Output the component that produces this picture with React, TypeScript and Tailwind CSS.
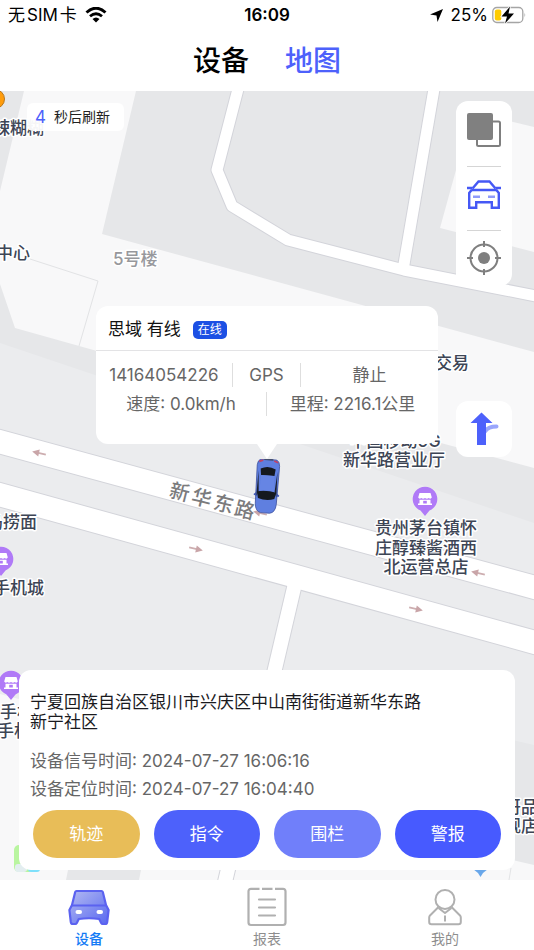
import { useEffect, useState } from "react";

const tools = [
  { key: "layers", label: "图层", Icon: LayersIcon },
  { key: "car", label: "车辆位置", Icon: CarOutlineIcon },
  { key: "locate", label: "我的位置", Icon: LocateIcon },
];

const actions = [
  { label: "轨迹", className: "bg-[#e8bd58]" },
  { label: "指令", className: "bg-[#4d61fb]" },
  { label: "围栏", className: "bg-[#707ffa]" },
  { label: "警报", className: "bg-[#475aff]" },
];

const tabs = [
  { key: "device", label: "设备", Icon: DeviceIcon },
  { key: "report", label: "报表", Icon: ReportIcon },
  { key: "mine", label: "我的", Icon: MineIcon },
];

function LayersIcon() {
  return (
    <svg width="34" height="34" viewBox="0 0 34 34" aria-hidden="true">
      <rect x="10" y="8.5" width="23" height="24.5" rx="1.5" fill="#fff" stroke="#7f7f7f" strokeWidth="2" />
      <rect x="0" y="0" width="26" height="27" rx="2" fill="#808080" />
    </svg>
  );
}

function CarOutlineIcon() {
  return (
    <svg width="34" height="34" viewBox="0 0 34 34" fill="none" stroke="#4558f5" strokeWidth="2.4" aria-hidden="true">
      <path d="M5.5 11.5 11.500 4.500h11l6 7" />
      <path d="M0 11h5.500M28.500 11H34M5 13h24" />
      <path d="M5 12.500 2.200 16v14.800h7V25.200h15.600v5.600h7V16L29 12.500" />
      <path d="M6 19.700h7M21 19.700h7" stroke="#8f9bfa" strokeWidth="2.600" />
    </svg>
  );
}

function LocateIcon() {
  return (
    <svg width="34" height="34" viewBox="0 0 34 34" fill="none" stroke="#7f7f7f" strokeWidth="2" aria-hidden="true">
      <circle cx="17" cy="17" r="13.500" />
      <circle cx="17" cy="17" r="6" fill="#7f7f7f" stroke="none" />
      <path d="M17 0v6M17 28v6M0 17h6M28 17h6" />
    </svg>
  );
}

function NavigateIcon() {
  return (
    <svg width="30" height="34" viewBox="-1 0 30 34" fill="none" aria-hidden="true">
      <path d="M15 19.500c1.500-2.500 5-5 11.500-5" stroke="#9aa6fc" strokeWidth="4" strokeLinecap="round" />
      <path d="M11.500 0.500 22.500 11h-6.500v22H7V11H0.500z" fill="#4d61fb" />
    </svg>
  );
}

function DeviceIcon() {
  return (
    <svg width="42" height="38" viewBox="0 0 42 38" aria-hidden="true">
      <defs>
        <linearGradient id="deviceFill" x1="0" y1="0" x2="1" y2="1">
          <stop offset="0" stopColor="#b4bbf2" />
          <stop offset="1" stopColor="#5868f0" />
        </linearGradient>
      </defs>
      <path
        d="M8.500 3h25q1 0 1.300 1L38 17l2.600 5-1.400 12q-.300 2-2 2h-2.500q-1 0-1.500-1l-2-4q-10.200-1.500-20.400 0l-2 4q-.500 1-1.500 1H4.800q-1.700 0-2-2L1.400 22 4 17 7.200 4q.300-1 1.300-1z"
        fill="url(#deviceFill)"
        stroke="#5b62f0"
        strokeWidth="2.200"
        strokeLinejoin="round"
      />
      <path d="M4 17.500h34" stroke="#5b62f0" strokeWidth="2.200" />
      <rect x="7.500" y="22" width="6.500" height="4" rx="2" fill="#fff" />
      <rect x="28.500" y="22" width="6.500" height="4" rx="2" fill="#fff" />
    </svg>
  );
}

function ReportIcon() {
  return (
    <svg width="40" height="40" viewBox="0 0 40 40" fill="none" stroke="#b0b0b0" strokeWidth="2.200" aria-hidden="true">
      <path d="M12.500 1.800H4Q1.500 1.800 1.500 4.300V35.500Q1.500 38 4 38H36Q38.500 38 38.500 35.500V4.300Q38.500 1.800 36 1.800H28M15 1.800H25.500" />
      <path d="M12 12.500h16M12 20.500h16M12 28.500h16" strokeLinecap="round" />
    </svg>
  );
}

function MineIcon() {
  return (
    <svg width="34" height="38" viewBox="0 0 34 38" fill="none" stroke="#b0b0b0" strokeWidth="2" strokeLinejoin="round" aria-hidden="true">
      <circle cx="17" cy="11.500" r="9.500" />
      <path d="M10.500 19 2 27.500Q1.200 28.300 1.200 29.500V34Q1.200 36.300 3.500 36.300H30.500Q32.800 36.300 32.800 34V29.500Q32.800 28.300 32 27.500L23.500 19" />
      <path d="M10.500 20 17 25 23.500 20M17 27.500v6" />
    </svg>
  );
}

function CarMarker() {
  return (
    <svg width="28" height="56" viewBox="0 0 28 56" aria-hidden="true">
      <g transform="translate(0 -1) rotate(4 14 28)">
        <path d="M1.500 37.500 4 35.500v3M26.500 37.500 24 35.500v3" stroke="#3f56b5" strokeWidth="1.500" fill="#5b78e0" />
        <path
          d="M6 1.500h16q3 1.500 3.200 6L24.500 46q-.500 8-6 9h-9q-5.500-1-6-9L2.800 7.500q.200-4.500 3.200-6z"
          fill="#5f7fe0"
          stroke="#3f539f"
          strokeWidth="0.800"
        />
        <path d="M4.500 13 6 33 4 39zM23.500 13 22 33l2 6z" fill="#1b202c" />
        <path d="M6.500 11q7.500-4 15 0l-.800 6.500H7.300z" fill="#15191f" />
        <path d="M4.300 34q9.700-2 19.400 0l-1.500 6.500q-8.200 3-16.400 0z" fill="#15191f" />
        <path d="M7.300 17.500h13.400l.6 15.500q-7.300-1.300-14.600 0z" fill="#6685e4" />
        <path d="M4.500 4 8.500 2.500M23.500 4 19.500 2.500" stroke="#c04468" strokeWidth="1.800" />
        <path d="M9.500 1.500h9" stroke="#46506f" strokeWidth="1.500" />
      </g>
    </svg>
  );
}

function ShopPin({ x, y }: { x: number; y: number }) {
  return (
    <g transform={`translate(${x} ${y})`}>
      <path d="M0 17 -4.500 11.500A12.300 12.300 0 1 1 4.500 11.500z" fill="#b07af7" />
      <path d="M-5.500-6h11l1.300 4.500q-1.200 2-3 .500-1.900 1.500-3.800 0-1.900 1.500-3.800 0-1.800 1.500-3-.500z" fill="#fff" />
      <path d="M-5.500.800h11V4.500H7V6H-7V4.500h1.500z" fill="#fff" />
      <rect x="-1.800" y="1.800" width="3.600" height="2.700" fill="#b07af7" />
    </g>
  );
}

function FlowArrow({ x, y, back }: { x: number; y: number; back?: boolean }) {
  return (
    <g transform={`translate(${x} ${y}) rotate(${back ? 193 : 13})`}>
      <path d="M-7 0H3" stroke="#cdaeb0" strokeWidth="1.800" />
      <path d="M0-3.500 7 0 0 3.500z" fill="#c9a5a8" />
    </g>
  );
}

function MapCanvas() {
  return (
    <svg
      className="absolute inset-0 w-full h-full"
      viewBox="0 91 534 789"
      preserveAspectRatio="xMidYMin slice"
      aria-label="地图"
    >
      <rect x="0" y="91" width="534" height="789" fill="#e6e7e9" />
      <path d="M0 343 534 523V745L500 737H0z" fill="#ebecee" />

      {/* blocks */}
      <path d="M24 91H136L102 234 534 352V468L97 351 15 328 0 284V191z" fill="#f8f8f9" />
      <path d="M472 112 534 127V252L440 228z" fill="#f8f8f9" />
      <path d="M0 694 60 710V880H0z" fill="#f8f8f9" />
      <path d="M0 870H68L66 880H0zM141 870 139 880H534V865L500 857V870z" fill="#f8f8f9" />
      <path d="M30 259 98 281 79 346M511 868 509 880" fill="none" stroke="#e2e3e5" />

      {/* streets: grey casing first, white surface on top */}
      <g fill="none" stroke="#d3d4da" strokeLinejoin="round">
        <path d="M238 89 217 170 232 206 288 240 404 270 536 296" strokeWidth="13" />
        <path d="M434 89 403 270" strokeWidth="13" />
        <path d="M-10 439 544 590" strokeWidth="25" />
        <path d="M-10 492 544 645" strokeWidth="25" />
        <path d="M297 575 225 882" strokeWidth="16" />
      </g>
      <g fill="none" stroke="#fff" strokeLinejoin="round">
        <path d="M238 89 217 170 232 206 288 240 404 270 536 296" strokeWidth="11" />
        <path d="M434 89 403 270" strokeWidth="11" />
        <path d="M-10 439 544 590" strokeWidth="23" />
        <path d="M-10 492 544 645" strokeWidth="23" />
        <path d="M297 575 225 882" strokeWidth="14" />
      </g>

      <FlowArrow x={39} y={453} back />
      <FlowArrow x={260} y={513} back />
      <FlowArrow x={478} y={573} back />
      <FlowArrow x={196} y={549} />
      <FlowArrow x={416} y={609} />

      <circle cx="-5" cy="99" r="9.500" fill="#ff9c0c" stroke="#b9771b" />
      <ShopPin x={425} y={499} />
      <ShopPin x={1} y={559} />
      <ShopPin x={11} y={683} />
      <rect x="14" y="845" width="20" height="27" rx="5" fill="#b9f5a0" />
      <rect x="15" y="864" width="12" height="8" rx="3" fill="#e3eef0" />
      <rect x="28" y="864" width="12" height="8" rx="3" fill="#7fe0fb" />
      <path d="M473 869h15l-5 4-2.500 4-2.500-4z" fill="#69a7ea" />

      <g
        className="font-medium text-[17px]"
        fill="#3d4555"
        stroke="#fff"
        strokeWidth="3"
        strokeLinejoin="round"
        paintOrder="stroke"
      >
        <text x="44" y="134" textAnchor="end">辣糊糊</text>
        <text x="30" y="259" textAnchor="end">中心</text>
        <text x="435" y="369">交易</text>
        <text x="395" y="447" textAnchor="middle">中国移动5G</text>
        <text x="394" y="466" textAnchor="middle">新华路营业厅</text>
        <text x="426" y="534" textAnchor="middle">贵州茅台镇怀</text>
        <text x="426" y="554" textAnchor="middle">庄醇臻酱酒西</text>
        <text x="426" y="573" textAnchor="middle">北运营总店</text>
        <text x="37" y="528" textAnchor="end">岛捞面</text>
        <text x="44" y="594" textAnchor="end">手机城</text>
        <text x="0" y="718">手机</text>
        <text x="-3" y="737">手机</text>
        <text x="504" y="813">哥品牌</text>
        <text x="504" y="832">舰店</text>
        <text x="113" y="265" fill="#97989c">5号楼</text>
      </g>
      <g className="font-medium text-[20px]" fill="#7b7b7d" textAnchor="middle">
        <text transform="translate(178 499) rotate(14)">新</text>
        <text transform="translate(200 505) rotate(14)">华</text>
        <text transform="translate(222 511) rotate(14)">东</text>
        <text transform="translate(243 517) rotate(14)">路</text>
      </g>
    </svg>
  );
}

function StatusBar() {
  return (
    <div className="grid grid-cols-3 items-center h-[30px] px-2 text-[17px] leading-[30px]">
      <div className="flex items-center gap-2">
        <span className="flex gap-[2px]">
          <span>无</span>
          <span>SIM</span>
          <span>卡</span>
        </span>
        <svg width="22" height="16" viewBox="0 0 22 16" aria-hidden="true">
          <path d="M1.500 5.500Q11-3 20.500 5.500" fill="none" stroke="#000" strokeWidth="3" />
          <path d="M5 9.300Q11 4.200 17 9.300" fill="none" stroke="#000" strokeWidth="2.800" />
          <path d="M7.500 12Q11 9 14.500 12L11 15.500z" />
        </svg>
      </div>
      <span className="text-center font-semibold">16:09</span>
      <div className="flex items-center justify-end">
        <svg width="13" height="13" viewBox="0 0 13 13" className="mr-2" aria-hidden="true">
          <path d="M13 0 7.500 13 6.500 6.500 0 5.500z" />
        </svg>
        <span className="mr-1">25%</span>
        <svg width="34" height="18" viewBox="0 0 34 18" aria-hidden="true">
          <rect x="0.800" y="1.500" width="30" height="15" rx="4" fill="none" stroke="#a5a5a5" strokeWidth="1.300" />
          <path d="M32.500 6.500q1.500 2.500 0 5z" fill="#a5a5a5" />
          <rect x="2.800" y="3.500" width="6.500" height="11" rx="2" fill="#fc0" />
          <path d="M18 0.500 9.500 10.500h5.500L13 17.500 22 7.500h-5.500z" stroke="#fff" strokeWidth="1.500" paintOrder="stroke" />
        </svg>
      </div>
    </div>
  );
}

function DevicePopup() {
  return (
    <div className="absolute inset-x-0 top-[215px] flex flex-col items-center pointer-events-none">
      <div className="w-[342px] bg-white rounded-xl pb-7 text-[17px] text-[#666] pointer-events-auto">
        <div className="flex items-center gap-3 h-[45px] px-3 pt-1 border-b border-[#e3e3e5]">
          <h2 className="text-[#111]">思域 有线</h2>
          <span className="rounded-[5px] bg-[#1c50e4] px-[5px] text-xs leading-[18px] text-white">在线</span>
        </div>
        <div className="grid grid-cols-5 pt-3 text-center leading-[24px]">
          <span className="col-span-2 border-r border-[#dedede]">14164054226</span>
          <span className="border-r border-[#dedede]">GPS</span>
          <span className="col-span-2">静止</span>
        </div>
        <div className="grid grid-cols-2 pt-[5px] text-center leading-[24px]">
          <span className="border-r border-[#dedede]">速度: 0.0km/h</span>
          <span>里程: 2216.1公里</span>
        </div>
      </div>
      <svg width="20" height="15" viewBox="0 0 20 15" aria-hidden="true">
        <path d="M0 0h20L10 15z" fill="#fff" />
      </svg>
      <CarMarker />
    </div>
  );
}

export default function App() {
  const [view, setView] = useState("地图");
  const [tab, setTab] = useState("device");
  const [seconds, setSeconds] = useState(4);

  useEffect(() => {
    const timer = setInterval(() => setSeconds((s) => (s > 1 ? s - 1 : 10)), 60000);
    return () => clearInterval(timer);
  }, []);

  return (
    <div className="flex flex-col min-h-screen bg-white text-black font-[Inter,'Noto_Sans_CJK_SC',sans-serif]">
      <header>
        <StatusBar />
        <div className="flex justify-center gap-9 h-[61px]">
          {["设备", "地图"].map((name) => (
            <button
              key={name}
              onClick={() => setView(name)}
              className={`text-[28px] font-medium ${view === name ? "text-[#4d61fb]" : "text-black"}`}
            >
              {name}
            </button>
          ))}
        </div>
      </header>

      <main className="relative flex-1 min-h-[700px] overflow-hidden">
        <MapCanvas />

        <div className="absolute left-[27px] top-3 flex items-center gap-2 h-7 rounded-md bg-white/95 pl-2 pr-[14px] text-sm text-[#222]">
          <span className="text-[17px] text-[#4d61fb]">{seconds}</span>
          秒后刷新
        </div>

        <div className="absolute right-[22px] top-[10px] flex flex-col items-center w-14 rounded-xl bg-white pt-3 pb-[11px]">
          {tools.map(({ key, label, Icon }, i) => (
            <div key={key} className={i > 0 ? "mt-[19px] border-t border-[#d5d5d5] pt-[10px]" : ""}>
              <button aria-label={label} className="block">
                <Icon />
              </button>
            </div>
          ))}
        </div>

        <button
          aria-label="导航"
          className="absolute right-[22px] top-[310px] flex items-center justify-center size-14 rounded-xl bg-white"
        >
          <NavigateIcon />
        </button>

        <DevicePopup />

        <section className="absolute inset-x-[19px] bottom-[10px] rounded-xl bg-white pt-[22px] pb-3 text-[17px]">
          <p className="pl-[11px] pr-20 leading-[20px] text-[#1a1a1e]">
            宁夏回族自治区银川市兴庆区中山南街街道新华东路新宁社区
          </p>
          <div className="mt-[15px] px-[11px] leading-[28px] text-[#666]">
            <p>设备信号时间: 2024-07-27 16:06:16</p>
            <p>设备定位时间: 2024-07-27 16:04:40</p>
          </div>
          <div className="mt-[7px] grid grid-cols-4 gap-[14px] px-[14px]">
            {actions.map((a) => (
              <button key={a.label} className={`h-12 pt-[2px] rounded-full text-white ${a.className}`}>
                {a.label}
              </button>
            ))}
          </div>
        </section>
      </main>

      <nav className="grid grid-cols-3 h-[70px]">
        {tabs.map(({ key, label, Icon }) => (
          <button
            key={key}
            onClick={() => setTab(key)}
            className={`flex flex-col items-center pt-[7px] text-sm leading-[20px] ${
              tab === key ? "font-medium text-[#147bf5]" : "text-[#8e8e8e]"
            }`}
          >
            <span className="flex items-center h-10 mb-[2px]">
              <Icon />
            </span>
            {label}
          </button>
        ))}
      </nav>
    </div>
  );
}
